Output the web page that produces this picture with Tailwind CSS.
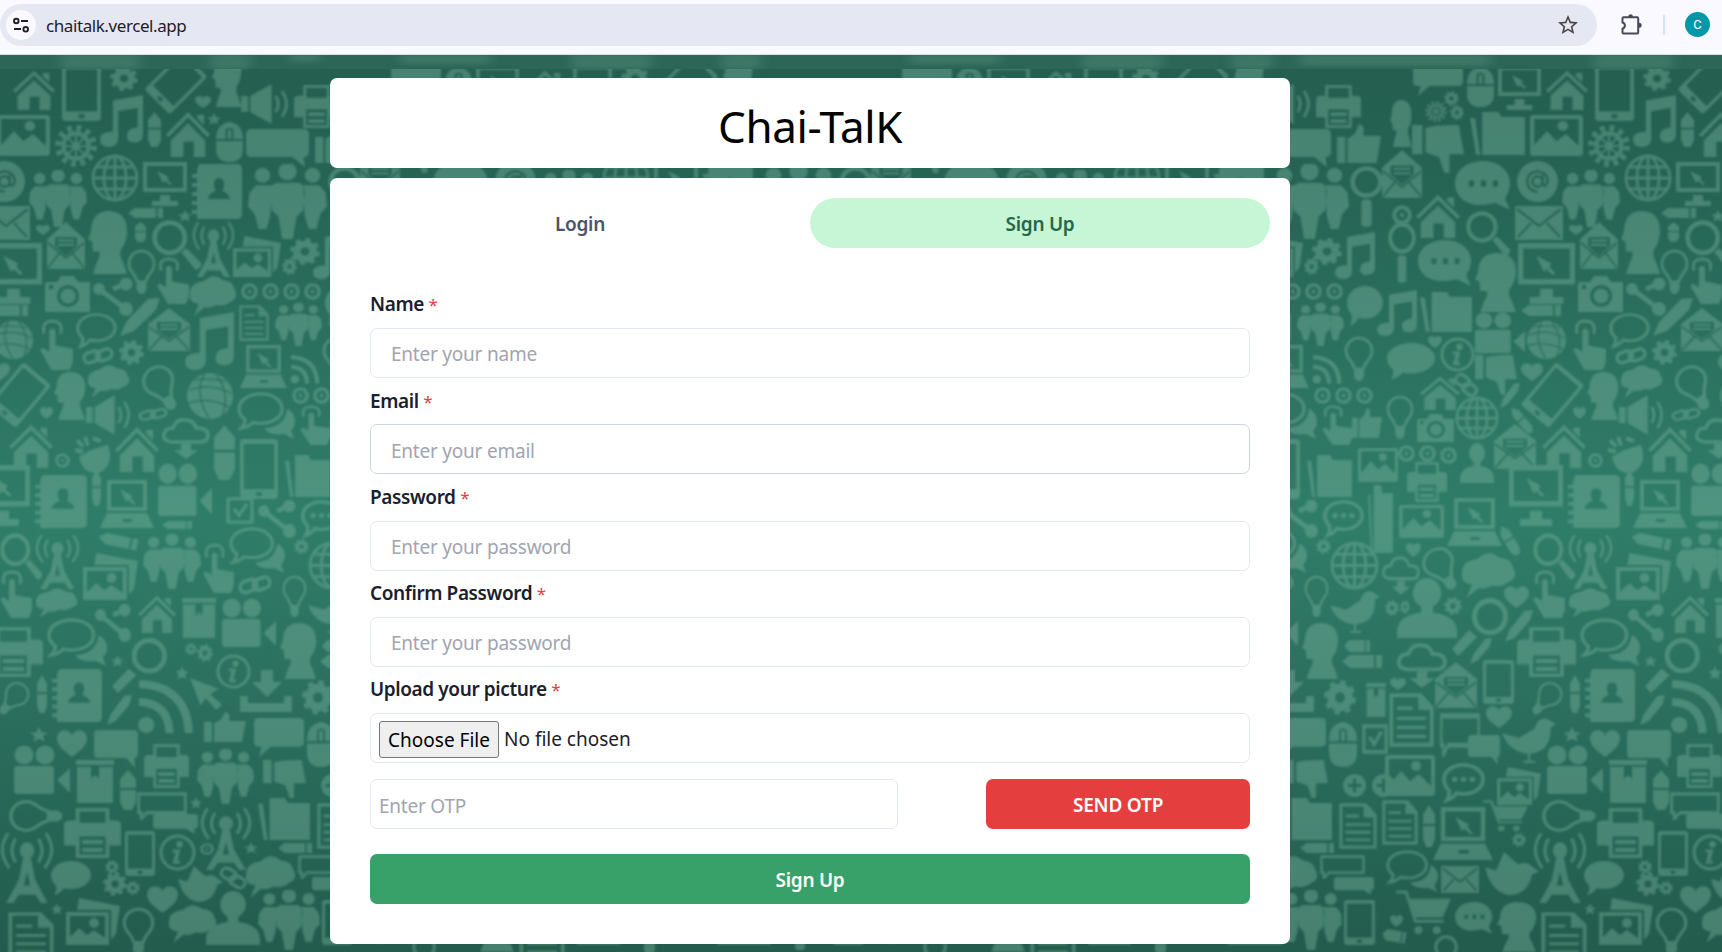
<!DOCTYPE html>
<html lang="en">
<head>
<meta charset="utf-8">
<title>Chai-TalK</title>
<script src="https://cdn.jsdelivr.net/npm/@tailwindcss/browser@4"></script>
</head>
<body class="h-[952px] w-[1722px] overflow-hidden bg-[#286857] font-['Noto_Sans','Open_Sans',sans-serif] text-[#1a202c]">

<div class="relative flex h-[952px] flex-col">
  <!-- Wallpaper -->
  <svg class="absolute inset-0" width="1722" height="952" viewBox="0 0 1722 952" aria-hidden="true">
    <defs>
      <linearGradient id="base" x1="0" y1="0" x2="0" y2="1">
        <stop offset="0" stop-color="#235c4d"/><stop offset=".2" stop-color="#266454"/>
        <stop offset=".42" stop-color="#2d7563"/><stop offset=".55" stop-color="#2f7d68"/>
        <stop offset=".72" stop-color="#2c705f"/><stop offset=".9" stop-color="#256353"/><stop offset="1" stop-color="#235b4c"/>
      </linearGradient>
      <g id="o-bubble"><path d="M20 0C31 0 40 7 40 16S31 32 20 32Q16 32 13 31Q9 37 3 39Q6 34 5 28Q0 23 0 16C0 7 9 0 20 0Z"/></g>
      <symbol id="house" viewBox="0 0 40 40" preserveAspectRatio="none"><path d="M2 22 20 4 38 22" fill="none" stroke="currentColor" stroke-width="3.4"/><path d="M28 4h6v9l-6-6zM5 26 20 11l15 15v14H25V27H16v13H5z"/></symbol>
      <symbol id="tablet" viewBox="0 0 40 60" preserveAspectRatio="none"><path fill-rule="evenodd" d="M4 0h32q4 0 4 4v52q0 4-4 4H4q-4 0-4-4V4q0-4 4-4zM4 5v45h32V5zM17 53v4h6v-4z"/></symbol>
      <symbol id="gear" viewBox="0 0 40 40" preserveAspectRatio="none"><circle cx="20" cy="20" r="11" fill="none" stroke="currentColor" stroke-width="10"/><circle cx="20" cy="20" r="17.5" fill="none" stroke="currentColor" stroke-width="5" stroke-dasharray="6.87 6.87"/></symbol>
      <symbol id="cog" viewBox="0 0 40 40" preserveAspectRatio="none"><circle cx="20" cy="20" r="12" fill="none" stroke="currentColor" stroke-width="4"/><circle cx="20" cy="20" r="17" fill="none" stroke="currentColor" stroke-width="6" stroke-dasharray="4.45 4.45"/><circle cx="20" cy="20" r="4"/><path d="M20 8v24M8 20h24M11 11l18 18M29 11 11 29" stroke="currentColor" stroke-width="2"/></symbol>
      <symbol id="bust" viewBox="0 0 40 56" preserveAspectRatio="none"><path d="M20 0C34 0 40 8 39 20Q38 29 33 34Q31 40 35 45L39 56H5L9 45Q13 40 11 36H5L4 27 0 25 3 18C3 8 8 0 20 0z"/></symbol>
      <symbol id="person" viewBox="0 0 40 40" preserveAspectRatio="none"><ellipse cx="20" cy="10" rx="9.5" ry="10"/><path d="M16 16h8v7Q40 25 40 36v4H0v-4Q0 25 16 23z"/></symbol>
      <symbol id="heart" viewBox="0 0 40 36" preserveAspectRatio="none"><path d="M20 36C10 28 0 22 0 11 0-2 17-3 20 7 23-3 40-2 40 11 40 22 30 28 20 36z"/></symbol>
      <symbol id="star" viewBox="0 0 40 40" preserveAspectRatio="none"><path d="m20 0 6 14 14 1-11 9 4 15-13-8-13 8 4-15L0 15l14-1z"/></symbol>
      <symbol id="pencil" viewBox="0 0 12 40" preserveAspectRatio="none"><path d="M6 0 12 9v9H0V9zM0 20h12v12l-3 8H3l-3-8z"/></symbol>
      <symbol id="pencilh" viewBox="0 0 40 12" preserveAspectRatio="none"><path d="M0 6 8 0h24v12H8zM34 0h6v12h-6z"/></symbol>
      <symbol id="note" viewBox="0 0 40 48" preserveAspectRatio="none"><path d="M12 5 40 0V36Q40 44 32 44T25 37 35 30V12L17 15V41Q16 48 8 48T0 41 12 34z"/></symbol>
      <symbol id="speaker" viewBox="0 0 48 40" preserveAspectRatio="none"><path d="M0 12h7v16H0zM9 12 30 0v40L9 28z"/><path d="M34 12q5 8 0 16M40 7q9 13 0 26" fill="none" stroke="currentColor" stroke-width="3"/></symbol>
      <symbol id="printer" viewBox="0 0 44 44" preserveAspectRatio="none"><path fill-rule="evenodd" d="M9 0h26v11h5q4 0 4 4v18h-9v11H9V33H0V15q0-4 4-4h5zM12 3v10h20V3zM12 25v16h20V25z"/><path d="M14 28h16v4H14zM14 35h16v4H14z"/></symbol>
      <symbol id="photo" viewBox="0 0 50 41" preserveAspectRatio="none"><path fill-rule="evenodd" d="M3 0h44q3 0 3 3v35q0 3-3 3H3q-3 0-3-3V3q0-3 3-3zM4 4v26L16 16l9 10 9-7 12 12V4z"/><circle cx="31" cy="11" r="5"/></symbol>
      <symbol id="photos" viewBox="0 0 54 47" preserveAspectRatio="none"><path d="M13 0 54 8 50 36 45 42V12H11z"/><path fill-rule="evenodd" d="M0 14h43v33H0zM4 18v21l9-9 8 7 7-5 11 8V18z"/><circle cx="28" cy="25" r="5"/></symbol>
      <symbol id="mouse" viewBox="0 0 28 42" preserveAspectRatio="none"><path fill-rule="evenodd" d="M14 0Q28 2 28 18H18V8q-4-4-8 0v10H0Q0 2 14 0zM0 20h28v8q0 14-14 14T0 28z"/><rect x="12" y="8" width="4" height="10" rx="2"/></symbol>
      <symbol id="talkr" viewBox="0 0 60 38" preserveAspectRatio="none"><path d="M5 0h50q5 0 5 5v18q0 5-5 5l1 10-12-10H5q-5 0-5-5V5q0-5 5-5z"/></symbol>
      <symbol id="talkl" viewBox="0 0 60 38" preserveAspectRatio="none"><path d="M5 0h50q5 0 5 5v18q0 5-5 5H20L6 38l3-10H5q-5 0-5-5V5q0-5 5-5z"/></symbol>
      <symbol id="talko" viewBox="0 0 60 30" preserveAspectRatio="none"><path d="M2 2h56v20H12l-7 7v-7H2z" fill="none" stroke="currentColor" stroke-width="3.5"/></symbol>
      <symbol id="bubble" viewBox="0 0 40 40" preserveAspectRatio="none"><use href="#o-bubble"/></symbol>
      <symbol id="bubbleo" viewBox="-2 -2 44 44" preserveAspectRatio="none"><use href="#o-bubble" fill="none" stroke="currentColor" stroke-width="3.6"/></symbol>
      <symbol id="ovaldots" viewBox="-2 -2 44 44" preserveAspectRatio="none"><use href="#o-bubble" fill="none" stroke="currentColor" stroke-width="4"/><circle cx="11" cy="16" r="3"/><circle cx="20" cy="16" r="3"/><circle cx="29" cy="16" r="3"/></symbol>
      <symbol id="dots" viewBox="0 0 56 48" preserveAspectRatio="none"><path fill-rule="evenodd" d="M28 0C43 0 55 9 55 22 55 29 51 35 50 37L55 48 40 41C12 48 0 35 0 22 0 9 12 0 28 0zM14 19v6h5v-6zM26 19v6h5v-6zM38 19v6h5v-6z"/></symbol>
      <symbol id="pair" viewBox="0 0 58 48" preserveAspectRatio="none"><path d="M24 2C37 2 45 9 45 17S37 32 24 32Q19 32 16 31 11 36 4 37 8 33 8 28 2 24 2 17C2 9 11 2 24 2Z" fill="none" stroke="currentColor" stroke-width="3.4"/><path d="M50 17q8 4 8 13 0 6-4 9l3 9-10-5Q32 45 27 37 48 36 50 17z"/></symbol>
      <symbol id="cloud" viewBox="0 0 48 40" preserveAspectRatio="none"><path d="M14 5Q24-4 33 4 44 5 45 12 51 22 41 26 35 31 27 29 18 33 15 31L4 40 9 28Q-2 27 0 17 0 7 14 5z"/></symbol>
      <symbol id="down" viewBox="0 0 48 42" preserveAspectRatio="none"><path d="M9 25Q0 23 2 17 3 11 11 11 14 2 23 3 32 3 34 11 46 11 46 18 46 25 38 25z" fill="none" stroke="currentColor" stroke-width="3.6"/><path d="M19 27h10v6h7L24 42 12 33h7z"/></symbol>
      <symbol id="at" viewBox="0 0 40 40" preserveAspectRatio="none"><circle cx="20" cy="20" r="20"/><path d="M25 14v9q3 3 5-3 0-9-10-10Q10 11 10 20t10 10M25 20a5 5 0 1 0-10 0 5 5 0 0 0 10 0" fill="none" stroke="#266353" stroke-width="2.5"/></symbol>
      <symbol id="pie" viewBox="0 0 36 36" preserveAspectRatio="none"><path d="M14 14 33 8Q40 28 24 35 8 37 4 20z"/><path d="M2 4l6 6M10 1l3 8M0 13l8 2M18 2l8 3" stroke="currentColor" stroke-width="4"/></symbol>
      <symbol id="people" viewBox="0 0 60 60" preserveAspectRatio="none"><circle cx="11" cy="9" r="6"/><circle cx="49" cy="9" r="6"/><circle cx="30" cy="6" r="7"/><path d="M6 17h12l-1 24-3 11H8L5 40 0 34 1 23zM54 17H42l1 24 3 11h6l3-12 5-6-1-11zM22 15h16q5 1 5 8l-1 14-5 5-3 18h-8l-3-18-5-5-1-14q0-7 5-8z"/></symbol>
      <symbol id="globe" viewBox="0 0 48 48" preserveAspectRatio="none"><g fill="none" stroke="currentColor" stroke-width="3"><circle cx="24" cy="24" r="22"/><ellipse cx="24" cy="24" rx="11" ry="22"/><path d="M24 2v44M2 24h44M6 13h36M6 35h36"/></g></symbol>
      <symbol id="earth" viewBox="0 0 48 48" preserveAspectRatio="none"><circle cx="24" cy="24" r="23"/><g fill="none" stroke="#2d7563" stroke-width="1.8"><path d="M18 2q-10 20 5 44M30 2q15 20 6 42M3 18q22-8 43 4M2 31q22-7 43 5M8 8q14-2 32 1"/></g></symbol>
      <symbol id="monitor" viewBox="0 0 44 44" preserveAspectRatio="none"><path fill-rule="evenodd" d="M0 0h44v30H0zM4 4v22h36V4zM17 33h10v6h8v5H9v-5h8z"/><path d="m14 9 12 6-2 2 5 5-2 1-5-4-2 2z"/></symbol>
      <symbol id="laptop" viewBox="0 0 54 48" preserveAspectRatio="none"><path fill-rule="evenodd" d="M7 0h40v31H7zM11 4v23h32V4zM7 33h40l7 15H0zM23 39v3h9v-3z"/><path d="m20 9 13 7-2 2 5 6-2 1-6-5-2 2z"/></symbol>
      <symbol id="contacts" viewBox="0 0 52 55" preserveAspectRatio="none"><path fill-rule="evenodd" d="M7 0h38q5 0 5 5v45q0 5-5 5H5V50H0v-4h5v-5H0v-4h5v-5H0v-4h5v-5H0v-4h5v-5H0v-4h5V6zM27 14q-5 0-5 6 0 5 2 7-7 2-8 8h22q-1-6-8-8 2-2 2-7 0-6-5-6z"/></symbol>
      <symbol id="mail" viewBox="0 0 48 34" preserveAspectRatio="none"><rect width="48" height="34"/><path d="m2 3 22 17L46 3M3 31l13-14M45 31 32 17" fill="none" stroke="#266353" stroke-width="2.5"/></symbol>
      <symbol id="open" viewBox="0 0 42 43" preserveAspectRatio="none"><path fill-rule="evenodd" d="M21 0 42 16V43H0V16zM9 14v8l12 9 12-9V14z"/><path d="M12 16h18v2H12zM12 20h18v2H12z"/><path d="m1 42 14-15M41 42 27 27M1 19l20 14 20-14" fill="none" stroke="#2a6d5c" stroke-width="2"/></symbol>
      <symbol id="tower" viewBox="0 0 52 60" preserveAspectRatio="none"><circle cx="26" cy="15" r="7"/><path fill-rule="evenodd" d="M23 18h6l5 22 12 20H39l-5-7H18l-5 7H6L18 40zM26 33l-3 12h6z"/><g fill="none" stroke="currentColor" stroke-width="3"><path d="M15 25Q8 15 15 5M37 25Q44 15 37 5M9 30Q-4 15 8 0M43 30Q56 15 44 0"/></g></symbol>
      <symbol id="mag" viewBox="0 0 48 48" preserveAspectRatio="none"><circle cx="17" cy="17" r="14.5" fill="none" stroke="currentColor" stroke-width="4.5"/><path d="m28 31 5-4 14 14q1 5-5 7z"/></symbol>
      <symbol id="magv" viewBox="0 0 32 62" preserveAspectRatio="none"><circle cx="16" cy="16" r="13.500" fill="none" stroke="currentColor" stroke-width="4.500"/><path d="M11 35q5-4 10 0v24q-5 4-10 0z"/></symbol>
      <symbol id="magl" viewBox="0 0 56 56" preserveAspectRatio="none"><circle cx="38" cy="18" r="15.5" fill="none" stroke="currentColor" stroke-width="5"/><path d="m17 31 8 7L6 56 0 49z"/></symbol>
      <symbol id="bulb" viewBox="0 0 30 46" preserveAspectRatio="none"><path d="M11 34Q9 28 4 22 0 15 4 8 8 2 15 2T26 8Q30 15 26 22 21 28 19 34z" fill="none" stroke="currentColor" stroke-width="3"/><path d="M10 35h10v7l-3 4h-4l-3-4z"/></symbol>
      <symbol id="hand" viewBox="0 0 32 48" preserveAspectRatio="none"><path d="M4 14Q1 2 12 2T20 14" fill="none" stroke="currentColor" stroke-width="3"/><path d="M9 11q3-4 6 0v14l17 3v12l-3 8H11L0 29l3-2 6 4z"/></symbol>
      <symbol id="camera" viewBox="0 0 45 36" preserveAspectRatio="none"><path fill-rule="evenodd" d="M2 6h10l4-6h13l4 6h12v30H0V8zM23 9a11 11 0 1 0 .1 0zM4 9v4h4V9z"/><circle cx="23" cy="20" r="7.5"/></symbol>
      <symbol id="share" viewBox="0 0 40 38" preserveAspectRatio="none"><path d="M6 11 34 32M20 11 32 6" stroke="currentColor" stroke-width="5"/><circle cx="6" cy="11" r="6"/><circle cx="33" cy="6" r="6.5"/><circle cx="33" cy="31" r="7"/></symbol>
      <symbol id="ring" viewBox="0 0 18 18" preserveAspectRatio="none"><circle cx="9" cy="9" r="7" fill="none" stroke="currentColor" stroke-width="3.6"/><circle cx="9" cy="9" r="2"/></symbol>
      <symbol id="pen" viewBox="0 0 40 38" preserveAspectRatio="none"><path d="M0 38 6 24 28 1 40 0 36 12 14 33z"/></symbol>
      <symbol id="chain" viewBox="0 0 34 20" preserveAspectRatio="none"><g fill="none" stroke="currentColor" stroke-width="3.5"><rect x="2" y="6" width="17" height="10" rx="5" transform="rotate(-18 10 11)"/><rect x="15" y="4" width="17" height="10" rx="5" transform="rotate(-18 23 9)"/></g></symbol>
      <symbol id="doc" viewBox="0 0 40 48" preserveAspectRatio="none"><path d="M2 2h26l10 11v33H2z" fill="none" stroke="currentColor" stroke-width="3.4"/><path d="M26 2v13h12zM7 12h14v3H7zM7 21h26v3H7zM7 29h26v3H7zM7 37h26v3H7z"/></symbol>
      <symbol id="rss" viewBox="0 0 56 56" preserveAspectRatio="none"><circle cx="9" cy="47" r="8"/><path d="M2 24Q31 25 32 55M2 6Q49 8 51 55" fill="none" stroke="currentColor" stroke-width="8"/></symbol>
      <symbol id="folder" viewBox="0 0 54 43" preserveAspectRatio="none"><path d="M0 6h5l5 37H6zM12 0h16l3 5h23v38H12z"/></symbol>
      <symbol id="video" viewBox="0 0 56 50" preserveAspectRatio="none"><circle cx="10" cy="10" r="9.5"/><circle cx="31" cy="10" r="9.5"/><rect x="0" y="21" width="40" height="28" rx="3"/><path d="m43 35 13-12v25z"/></symbol>
      <symbol id="box" viewBox="0 0 38 43" preserveAspectRatio="none"><path fill-rule="evenodd" d="M0 0h38v5H0zM1 7h14v12l4-4 4 4V7h14v36H1z"/></symbol>
      <symbol id="check" viewBox="0 0 28 28" preserveAspectRatio="none"><path d="M2 2h24v24H2zM8 12l5 7 8-12" fill="none" stroke="currentColor" stroke-width="3.4"/></symbol>
      <symbol id="info" viewBox="0 0 36 36" preserveAspectRatio="none"><circle cx="18" cy="18" r="16" fill="none" stroke="currentColor" stroke-width="3.2"/><circle cx="20" cy="10" r="3.3"/><path d="M13 15h8l-3 11h3l-1 3h-7l3-11h-3z"/></symbol>
      <symbol id="cursor" viewBox="0 0 36 38" preserveAspectRatio="none"><path d="m2 6 30 11-9 5 12 11-6 5-11-12-5 8z"/></symbol>
      <symbol id="save" viewBox="0 0 52 42" preserveAspectRatio="none"><path d="M0 26h8v7h36v-7h8v16H0zM21 0h12v12h9L27 27 12 12h9z"/></symbol>
      <symbol id="up" viewBox="0 0 42 40" preserveAspectRatio="none"><path d="M0 13h8v27H0zM10 15l7-5 4-10q6 0 4 12h17l-4 28H10z"/></symbol>
      <symbol id="dn" viewBox="0 0 50 46" preserveAspectRatio="none"><path d="M0 0h10v28H0zM13 3q6-3 32-3l5 28H36v18h-5L26 31 13 26z"/></symbol>
      <symbol id="bird" viewBox="0 0 50 42" preserveAspectRatio="none"><path d="M0 16 16 20 30 12Q34 0 43 4l7 4-5 3Q46 32 26 34V40h5v2H20v-2h4v-6Q6 32 0 16z"/></symbol>
      <symbol id="dove" viewBox="0 0 54 42" preserveAspectRatio="none"><path d="M0 15 11 18 19 0 33 12Q42 8 47 14L54 19 47 22Q43 42 24 42 6 40 0 15z"/></symbol>
      <symbol id="cart" viewBox="0 0 54 46" preserveAspectRatio="none"><path d="M0 2h10l9 30h28" fill="none" stroke="currentColor" stroke-width="3"/><path d="M13 9h41l-8 19H19z"/><circle cx="22" cy="41" r="4"/><circle cx="40" cy="41" r="4"/></symbol>
      <symbol id="plus" viewBox="0 0 24 24" preserveAspectRatio="none"><path fill-rule="evenodd" d="M12 0a12 12 0 1 0 .1 0zM10.500 5h3v5.500H19v3h-5.500V19h-3v-5.500H5v-3h5.500z"/></symbol>
      <filter id="soft" x="0" y="0" width="1" height="1"><feGaussianBlur stdDeviation=".85"/></filter>
      <filter id="smear" x="-.1" y="-.5" width="1.2" height="2"><feGaussianBlur stdDeviation="6 2"/></filter>
    </defs>
    <rect width="1722" height="952" fill="url(#base)"/>
    <g opacity=".39" filter="url(#soft)"><g id="tile" fill="#80b9a5" color="#80b9a5"></g><g id="copies"></g></g>
    <rect y="54" width="1722" height="15" fill="#2b6656"/>
    <g fill="#5a9381" opacity=".38" filter="url(#smear)">
      <path d="M60 54h80v15H60zM210 54h40v15h-40zM290 54h30v8h-30zM400 54h90v10h-90zM571 54h80v15h-80zM721 54h40v15h-40zM910 54h90v10h-90zM1082 54h80v15h-80zM1232 54h40v15h-40zM1300 54h190v12h-190zM1593 54h80v15h-80z"/>
    </g>
  </svg>

  <!-- Browser toolbar -->
  <header class="relative flex h-[55px] shrink-0 items-start border-b border-[#dcdce4] bg-[#faf9ff] pt-1">
    <div class="flex h-[42px] w-[1597px] items-center rounded-full bg-[#e5e8f3] pr-[17px] pl-1.5">
      <div class="flex size-[30px] items-center justify-center rounded-full bg-[#faf9ff]">
        <svg width="18" height="18" viewBox="0 0 18 18" fill="none" stroke="#202124" stroke-width="1.900"><circle cx="4.300" cy="5" r="2.300"/><path d="M9 5h7M2 13h7"/><circle cx="13.700" cy="13.300" r="2.300"/></svg>
      </div>
      <span class="mt-px ml-[10px] text-[17px] tracking-[-0.42px] text-[#1f2024]">chaitalk.vercel.app</span>
      <svg class="ml-auto" width="24" height="24" viewBox="0 0 24 24" fill="#474747"><path d="m22 9.240-7.190-.62L12 2 9.190 8.630 2 9.240l5.460 4.730L5.820 21 12 17.270 18.180 21l-1.630-7.030zM12 15.400l-3.760 2.270 1-4.280-3.320-2.880 4.380-.38L12 6.100l1.710 4.040 4.380.38-3.320 2.880 1 4.280z"/></svg>
    </div>
    <svg class="mt-[7px] ml-[22px]" width="24" height="26" viewBox="0 0 24 26"><path d="M4.500 6.300h13.700q1 0 1 1v14.200q0 1-1 1H4.500q-1 0-1-1v-3.800c3.200-1 3.200-5.200 0-6.200V7.300q0-1 1-1z" fill="none" stroke="#474b59" stroke-width="2"/><path d="M9.300 6a2.300 2.700 0 0 1 4.600 0zM20 11.700a2.700 2.500 0 0 1 0 5z" fill="#474b59"/></svg>
    <div class="mt-[11px] ml-[20px] h-5 w-0.5 bg-[#d3e3fd]"></div>
    <div class="mt-2 ml-5 flex size-[25px] items-center justify-center rounded-full bg-[#0097a7] font-[Roboto] text-[13px] text-white">C</div>
  </header>

  <main class="relative mx-auto mt-[23px] flex w-[960px] translate-x-[-51px] flex-col gap-2.5">
    <h1 class="flex h-[90px] items-center justify-center rounded-[7px] bg-white pt-1.5 text-[44px] tracking-[-0.4px] text-black">Chai-TalK</h1>

    <section class="h-[766px] rounded-[7px] bg-white p-5 text-[19px]">
      <div class="grid h-[50px] grid-cols-2 text-center font-semibold tracking-[-0.3px]">
        <button class="pt-0.5 text-[#4a5568]">Login</button>
        <button class="rounded-full bg-[#c6f6d5] pt-0.5 text-[#276749]">Sign Up</button>
      </div>
      <form class="flex flex-col px-5 pt-10">
        <div class="h-[96.250px]"><label class="flex h-10 items-center pb-[7px] font-semibold tracking-[-0.4px]"><span>Name <span class="text-[17px] font-normal text-[#e53e3e]">*</span></span></label><input class="h-[50px] w-full rounded-[7px] border border-[#e2e8f0] px-5 pt-0.5 tracking-[-0.22px] placeholder:text-[#a0a5b0]" placeholder="Enter your name"></div>
        <div class="h-[96.250px]"><label class="flex h-10 items-center pb-[7px] font-semibold tracking-[-0.4px]"><span>Email <span class="text-[17px] font-normal text-[#e53e3e]">*</span></span></label><input class="h-[50px] w-full rounded-[7px] border border-[#cbd5e0] px-5 pt-[3px] tracking-[-0.22px] placeholder:text-[#a0a5b0]" placeholder="Enter your email"></div>
        <div class="h-[96.250px]"><label class="flex h-10 items-center pb-[7px] font-semibold tracking-[-0.4px]"><span>Password <span class="text-[17px] font-normal text-[#e53e3e]">*</span></span></label><input class="h-[50px] w-full rounded-[7px] border border-[#e2e8f0] px-5 pt-0.5 tracking-[-0.22px] placeholder:text-[#a0a5b0]" placeholder="Enter your password"></div>
        <div class="h-[96.250px]"><label class="flex h-10 items-center pb-[7px] font-semibold tracking-[-0.4px]"><span>Confirm Password <span class="text-[17px] font-normal text-[#e53e3e]">*</span></span></label><input class="h-[50px] w-full rounded-[7px] border border-[#e2e8f0] px-5 pt-0.5 tracking-[-0.22px] placeholder:text-[#a0a5b0]" placeholder="Enter your password"></div>
        <label class="flex h-10 items-center pb-[7px] font-semibold tracking-[-0.4px]"><span>Upload your picture <span class="text-[17px] font-normal text-[#e53e3e]">*</span></span></label>
        <div class="flex h-[50px] items-center rounded-[7px] border border-[#e2e8f0] px-2">
          <button type="button" class="mt-0.5 h-[37px] w-[120px] rounded-[3px] border border-[#767676] bg-[#efefef] pt-[3px] text-black">Choose File</button>
          <span class="ml-[5px] pt-[3px]">No file chosen</span>
        </div>
        <div class="mt-4 flex justify-between">
          <input class="h-[50px] w-[528px] rounded-[7px] border border-[#e2e8f0] px-2 pt-[3px] tracking-[-0.22px] placeholder:text-[#a0a5b0]" placeholder="Enter OTP">
          <button type="button" class="h-[50px] w-[264px] rounded-[7px] bg-[#e53e3e] pt-0.5 font-semibold tracking-[-0.2px] text-white">SEND OTP</button>
        </div>
        <button type="button" class="mt-[25px] h-[50px] rounded-[7px] bg-[#38a169] pt-0.5 font-semibold tracking-[-0.3px] text-white">Sign Up</button>
      </form>
    </section>
  </main>
</div>

<script>
// Wallpaper icons: name x y w h [rotation]; the tile repeats every 511px.
const icons = `house 12 69 44 41;tablet 62 64 39 57;gear 110 66 28 25;tablet 158 56 36 54 45;bust 212 54 30 53;heart 195 96 16 12;pencil 148 112 13 35;note 100 95 43 52;speaker 241 84 49 40;printer 294 85 45 43;photo -3 115 53 41;cog 55 125 42 42;house 165 110 46 47;mouse 216 122 27 40;talkr 246 129 63 38;star 207 113 14 12;at -16 161 41 41;people 29 170 58 57;globe 91 154 48 48;monitor 143 162 44 44;contacts 192 164 52 55;people 248 164 79 75;mail -18 206 48 34;pencilh 128 208 35 10;star 178 210 14 12;bust 88 211 40 63;pencil 135 222 11 20;mag 152 220 50 50;tower 192 222 43 55;photos 233 236 48 41;gear 290 238 30 27;gear 282 258 15 17;note 313 232 40 47;talkl 391 58 50 38;mouse 445 67 27 40;monitor 476 66 43 44;up 315 124 44 39;bust 368 100 22 47;cog 403 101 22 21;gear 422 91 15 15;gear 428 105 14 15;folder 448 112 55 43;dn 390 125 52 48;dots 433 161 56 49;magv 328 166 33 62;open 360 150 40 48;house 393 193 46 45;ring 370 205 20 20;mag 444 211 45 45;heart 36 225 14 10;open 47 222 38 47;monitor -15 243 57 61;pencilh -12 305 40 11;
camera 45 276 45 36;share 93 278 40 38;bulb 127 249 29 45;hand 157 257 32 47;cloud 190 276 47 40;ring 241 283 17 17;ring 262 283 17 17;ring 283 283 17 17;ring 304 283 17 17;pen 120 298 40 38;bubbleo 76 313 41 36;open 148 308 42 43;note 185 312 49 58;doc 239 305 30 36;people 275 303 47 43;gear 119 340 25 25;chain 82 346 32 20;earth -7 320 41 40;hand 40 319 33 51;tablet 1 367 37 56 40;heart -12 363 22 18;bust 54 372 32 48;cloud 88 365 42 33;speaker 86 395 46 40;bulb 145 364 34 48 -28;earth 186 372 48 48;laptop 240 345 47 43;rss 290 354 30 30;ring 292 387 17 17;ring 313 387 17 17;pair 237 392 58 47;heart 40 407 13 12;chain 138 407 30 15;house 8 423 46 45;ring 55 453 15 15;pie 75 436 36 38;house 114 425 46 47;down 162 417 48 42;pencil 214 425 21 55;tablet 240 439 38 60;hand 300 405 30 40;video 158 463 54 54;folder 285 455 45 42;
magv 366 222 28 62;dots 396 240 54 46;bust 453 253 42 59;bubble 325 286 36 41;note 355 290 40 46;folder 398 292 52 40;video 453 312 50 42;bulb 322 336 30 45;bubble 365 343 48 38;info 418 337 35 35;heart 406 336 14 12;dn 453 355 42 40;house 397 375 42 35;globe 433 396 44 44;ring 334 387 17 17;bulb 364 395 28 44;camera 395 414 37 28;pen 478 383 20 25;pencil 495 404 9 32 -40;open 472 424 42 45;person 438 443 34 40;ring 376 445 17 17;ring 397 445 17 17;ring 418 447 17 17;photo 336 448 40 34;up 330 408 30 30;chain 430 375 28 20 60;
monitor -24 465 54 61;contacts 35 475 54 53;pencil 92 470 9 36;laptop 100 480 54 48;check 226 497 28 27;share 258 500 38 38;mag 0 533 43 47;tower 35 535 45 54;hand 0 570 32 48;cloud 36 588 42 30;photos 83 553 55 47;people 143 534 58 55;house 137 594 40 39;hand 203 543 31 50;pair 229 527 56 46;gear 294 539 15 15;chain 238 574 34 22;box 182 598 34 40;video 222 598 54 50;bulb 282 575 25 42;printer -16 627 59 50;pair 47 618 60 48;share 95 604 36 38;magl 112 638 55 55;gear 185 643 12 12;gear 197 644 16 18;info 216 654 35 35;bust 280 623 37 56;bulb 0 680 26 38 40;pencil 37 675 10 38;contacts 52 669 52 53;rss 137 678 57 56;cursor 188 672 35 38;save 240 670 52 42;gear 302 680 32 35;pen 107 695 25 30;star 111 655 13 12;pencilh 162 521 30 8;pencilh 98 535 40 12 12;star 175 666 14 14;
ovaldots 301 500 41 38;folder 346 485 25 68;printer 385 462 40 40;photo 377 505 45 33;laptop 425 498 55 48;pencil 482 524 11 33 -30;globe 308 541 49 49;down 360 555 38 40;bulb 403 546 34 46 -30;cloud 440 553 54 45;bird 308 588 50 45;person 375 578 60 60;magl 430 598 56 58;heart 482 586 25 22;pen 483 610 28 32;gear 422 597 18 18;down 375 642 50 46;open 413 662 42 46;tablet 461 660 31 44;doc 367 693 45 54;heart 368 678 16 12;heart 464 706 26 22;pencilh 320 655 40 13;heart 384 543 15 14;gear 363 600 14 16;gear 378 600 10 14;pencilh 322 640 26 12;box 344 683 20 34;pen 448 638 22 26;
star 30 727 18 15;heart 57 730 30 27;talkr 94 730 44 38;printer 144 744 45 44;up 204 712 42 30;talkl 254 718 50 39;mouse 307 722 28 45;video 14 745 56 50;box 76 760 38 43;pencil 120 770 16 40;people 197 749 57 55;dn 263 760 43 38;bulb 19 789 33 54 -90;printer 64 808 57 50;talko 137 792 50 28;talkr 153 814 45 20;tower 200 808 52 62;folder 258 798 52 42;tablet 125 831 30 45;info 159 834 37 37;tower 0 833 54 70;bubble 51 861 40 35;gear 105 860 14 14;gear 103 872 24 24;gear 126 881 14 14;dove 178 866 45 36;cloud 246 856 50 42;heart 147 886 31 27;photos 66 898 54 47;bulb 122 907 33 48;cloud 169 905 48 38;person 206 891 54 54;people 258 890 62 60;star 51 903 12 12;doc 8 912 46 50;pencilh 278 843 34 10;star 244 842 14 12;chain 218 868 30 20 50;ring 200 843 14 12;star 190 797 12 12;pencilh 55 712 44 10;
talko 418 713 40 44;talkr 446 735 32 30;bird 480 715 54 48;photo 363 755 50 41;ovaldots 420 763 43 40;photos 475 767 44 38;plus 321 774 23 23;plus 350 774 23 23;doc 317 803 38 46;doc 360 800 36 45;pencil 401 805 12 42;laptop 411 807 60 53;cart 461 800 45 32;talko 298 855 45 24;talkr 312 877 40 18;pair 364 850 52 42;mail 419 866 38 27;dove 463 852 54 43;tablet 322 900 31 45;cart 374 890 55 45;dots 433 902 38 32;bust 475 902 40 50;heart 368 915 13 12;gear 490 833 14 14;check 340 724 26 30;mag 412 935 34 34;pencilh 360 930 24 12 10`;
const NS = 'http://www.w3.org/2000/svg', tile = document.getElementById('tile'), copies = document.getElementById('copies');
for (const line of icons.split(';')) {
  const [name, x, y, w, h, r] = line.trim().split(' ');
  const u = document.createElementNS(NS, 'use');
  u.setAttribute('href', '#' + name);
  Object.entries({ x, y, width: w, height: h }).forEach(([k, v]) => u.setAttribute(k, v));
  if (r) u.setAttribute('transform', `rotate(${r} ${+x + w / 2} ${+y + h / 2})`);
  tile.append(u);
}
for (const dx of [511, 1022, 1533]) {
  const u = document.createElementNS(NS, 'use');
  u.setAttribute('href', '#tile');
  u.setAttribute('x', dx);
  copies.append(u);
}
</script>
</body>
</html>
